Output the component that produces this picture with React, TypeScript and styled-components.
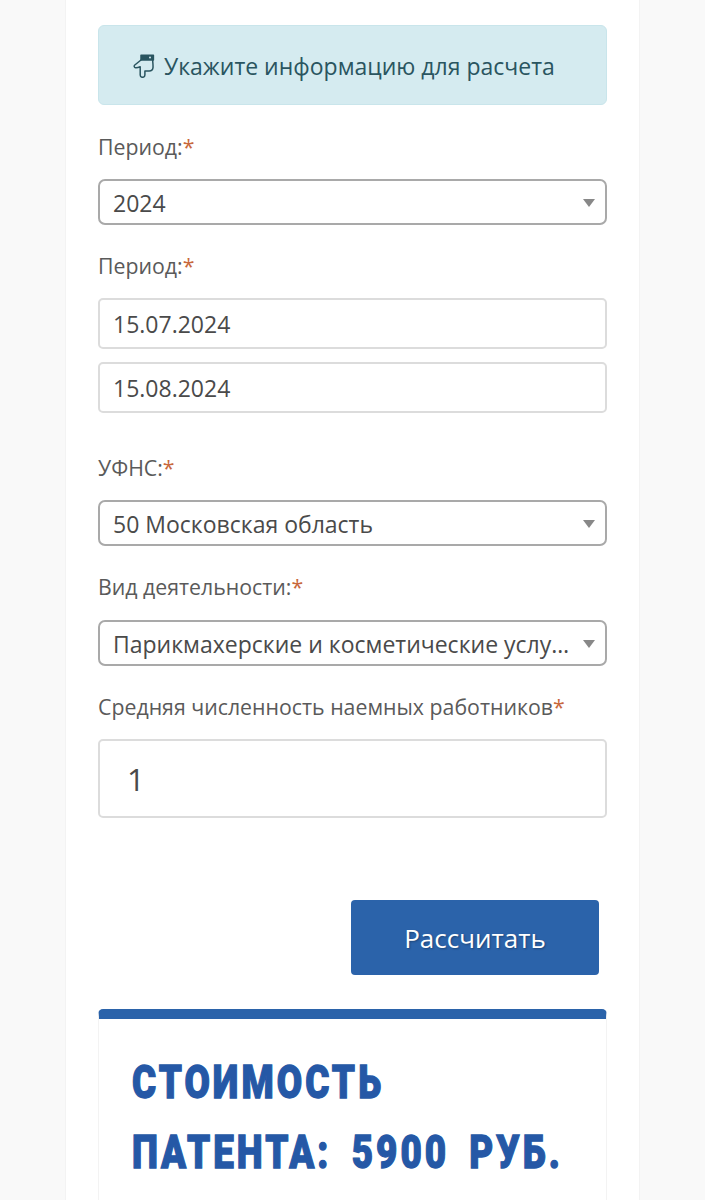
import React from "react";
import styled, { createGlobalStyle } from "styled-components";

const Global = createGlobalStyle`
  html, body { margin: 0; padding: 0; background: #f9f9f9; overflow: hidden; height: 1200px; }
  * { box-sizing: border-box; }
`;

const Page = styled.div`
  width: 575px;
  height: 1200px;
  margin-left: 65px;
  background: #fff;
  border-left: 1px solid #f3f3f3;
  border-right: 1px solid #f3f3f3;
  padding: 25px 32px 0;
  font-family: "Open Sans", "Noto Sans", sans-serif;
  overflow: hidden;
`;

const Alert = styled.div`
  height: 80px;
  background: #d5ebf0;
  border: 1px solid #c9e5eb;
  border-radius: 6px;
  color: #2a5560;
  font-size: 23px;
  display: flex;
  align-items: center;
  gap: 8px;
  padding: 1px 0 0 34px;
  margin-bottom: 27px;
`;

const Label = styled.label<{ $gap?: number }>`
  display: block;
  color: #5a5a5a;
  font-size: 21.3px;
  line-height: 30px;
  margin-bottom: ${(p) => p.$gap ?? 17}px;
`;

const Star = styled.span`
  color: #c8683c;
`;

const Field = styled.div<{ $gap?: number }>`
  margin-bottom: ${(p) => p.$gap ?? 26}px;
`;

const SelectBox = styled.div`
  position: relative;
  height: 46px;
  border: 2px solid #a9a9a9;
  border-radius: 7px;
  background: #fff;
  &::after {
    content: "";
    position: absolute;
    right: 10px;
    top: 18px;
    border-left: 6.5px solid transparent;
    border-right: 6.5px solid transparent;
    border-top: 8px solid #888;
  }
`;

const SelectEl = styled.select`
  appearance: none;
  width: 100%;
  height: 100%;
  border: 0;
  outline: 0;
  background: transparent;
  color: #4a4a4a;
  font: 23px "Open Sans", sans-serif;
  padding: 1px 30px 0 13px;
  text-overflow: ellipsis;
  white-space: nowrap;
`;

const DateInput = styled.input`
  display: block;
  width: 100%;
  height: 51px;
  border: 2px solid #dcdcdc;
  border-radius: 5px;
  background: #fff;
  color: #4a4a4a;
  font: 23px "Open Sans", sans-serif;
  padding: 0 13px;
  outline: 0;
  margin-bottom: 13px;
`;

const NumberInput = styled.input`
  display: block;
  width: 100%;
  height: 79px;
  border: 2px solid #dcdcdc;
  border-radius: 5px;
  background: #fff;
  color: #4a4a4a;
  font: 31px "Open Sans", sans-serif;
  padding: 0 27px;
  outline: 0;
`;

const Actions = styled.div`
  display: flex;
  justify-content: flex-end;
  padding-right: 8px;
  margin-top: 82px;
  margin-bottom: 34px;
`;

const Button = styled.button`
  width: 248px;
  height: 75px;
  border: 0;
  border-radius: 4px;
  background: #2b63aa;
  color: #fff;
  font: 26px "Open Sans", sans-serif;
  text-shadow: 1px 1px 2px rgba(0, 0, 0, 0.3);
`;

const Result = styled.div`
  border-top: 10px solid #2b63aa;
  border-radius: 5px 5px 0 0;
  border-left: 1px solid #f3f3f3;
  border-right: 1px solid #f3f3f3;
  padding: 28px 0 0 33px;
  height: 300px;
`;

const Heading = styled.h2`
  margin: 0;
  color: #2558a6;
  font-family: "Roboto", sans-serif;
  font-weight: 900;
  font-size: 46px;
  line-height: 70px;
  letter-spacing: 3.8px;
  word-spacing: 10px;
  -webkit-text-stroke: 1.3px #2558a6;
  white-space: nowrap;
  transform: scaleX(0.8);
  transform-origin: left center;
`;

const HandIcon = () => (
  <svg width="23" height="24" viewBox="0 0 23 24" fill="none" stroke="#2a5560" strokeWidth="1.5" strokeLinejoin="round" strokeLinecap="round">
    <path d="M8 6L1.8 11c-1 .9-.7 2.6.8 2.8 1.6.2 3.2-.4 4.6-1V21c0 1.5 1 2.3 2.3 2.3s2.4-.8 2.4-2.3v-4h4.3c2.2 0 3.6-1.4 3.8-3.4.2-2.6-.3-5.2-.3-7.6" />
    <path d="M8 1.3h12.4v4.7H8z" fill="#2a5560" />
    <circle cx="17" cy="3.5" r="1" fill="#d5ebf0" stroke="none" />
  </svg>
);

const Req = ({ children, gap }: { children: React.ReactNode; gap?: number }) => (
  <Label $gap={gap}>
    {children}
    <Star>*</Star>
  </Label>
);

const Select = ({ value }: { value: string }) => (
  <SelectBox>
    <SelectEl defaultValue={value}>
      <option>{value}</option>
    </SelectEl>
  </SelectBox>
);

export default function App() {
  return (
    <>
      <Global />
      <Page>
        <Alert>
          <HandIcon />
          Укажите информацию для расчета
        </Alert>
        <Field>
          <Req>Период:</Req>
          <Select value="2024" />
        </Field>
        <Field $gap={40}>
          <Req>Период:</Req>
          <DateInput defaultValue="15.07.2024" />
          <DateInput defaultValue="15.08.2024" />
        </Field>
        <Field>
          <Req>УФНС:</Req>
          <Select value="50 Московская область" />
        </Field>
        <Field>
          <Req gap={18}>Вид деятельности:</Req>
          <Select value="Парикмахерские и косметические услуги" />
        </Field>
        <Field $gap={0}>
          <Req>Средняя численность наемных работников</Req>
          <NumberInput defaultValue="1" />
        </Field>
        <Actions>
          <Button>Рассчитать</Button>
        </Actions>
        <Result>
          <Heading>
            СТОИМОСТЬ
            <br />
            ПАТЕНТА: 5900 РУБ.
          </Heading>
        </Result>
      </Page>
    </>
  );
}
